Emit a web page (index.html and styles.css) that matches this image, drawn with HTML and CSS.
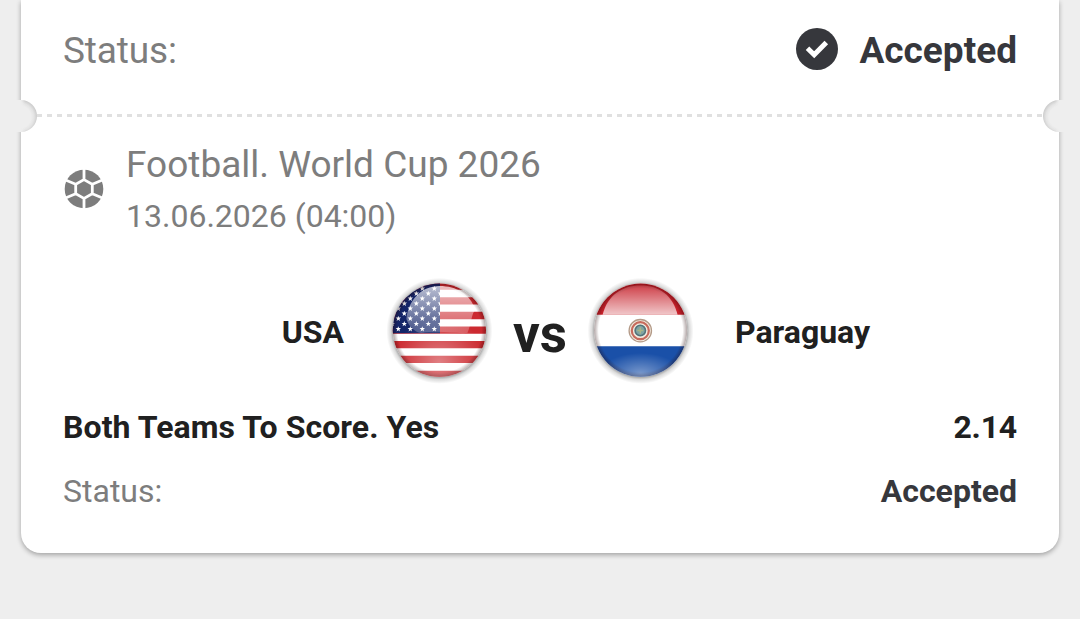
FILE: index.html
```html
<!DOCTYPE html>
<html lang="en">
<head>
    <meta charset="UTF-8">
    <meta name="viewport" content="width=device-width, initial-scale=1.0">
    <title>Bet slip</title>
    <link rel="stylesheet" href="styles.css">
</head>
<body>
    <main class="ticket">
        <div class="ticket-status">
            <span class="label">Status:</span>
            <span class="value">
                <svg class="check" viewBox="0 0 42 42">
                    <circle cx="21" cy="21" r="21" fill="#36373c"/>
                    <path d="M11.5 20.3l6.7 6.5L30.3 14.5" fill="none" stroke="#fff" stroke-width="5"/>
                </svg>
                Accepted
            </span>
        </div>

        <div class="tear">
            <span class="notch notch-left"></span>
            <span class="dashes"></span>
            <span class="notch notch-right"></span>
        </div>

        <section class="event">
            <header class="event-header">
                <svg class="ball" viewBox="0 0 40 40">
                    <circle cx="20.5" cy="20" r="19.3" fill="#7d7d7d"/>
                    <path d="M20.5 10.6l8.3 4.7v9.4l-8.3 4.7-8.300-4.700v-9.400zM20.5 0v10.600M20.5 29.400v11M12.200 15.300L2 11M28.800 15.300L39 11M12.200 24.700L2 29M28.800 24.700L39 29" fill="none" stroke="#fff" stroke-width="2.800"/>
                </svg>
                <div>
                    <div class="league">Football. World Cup 2026</div>
                    <div class="date">13.06.2026 (04:00)</div>
                </div>
            </header>

            <div class="match">
                <span class="team team-home">USA</span>
                <svg class="flag" viewBox="0 0 120 120">
                    <defs>
                        <clipPath id="usa"><circle cx="59.4" cy="60.2" r="46.6"/></clipPath>
                        <clipPath id="canton"><path d="M10 10h50v53.3H10z"/></clipPath>
                        <radialGradient id="halo">
                            <stop offset=".86" stop-color="#000" stop-opacity=".4"/>
                            <stop offset=".92" stop-color="#000" stop-opacity=".14"/>
                            <stop offset="1" stop-color="#000" stop-opacity="0"/>
                        </radialGradient>
                        <radialGradient id="rim">
                            <stop offset=".9" stop-color="#200" stop-opacity="0"/>
                            <stop offset="1" stop-color="#200" stop-opacity=".35"/>
                        </radialGradient>
                        <linearGradient id="gloss" x1="0" y1="0" x2="0" y2="1">
                            <stop offset="0" stop-color="#fff" stop-opacity=".7"/>
                            <stop offset="1" stop-color="#fff" stop-opacity=".2"/>
                        </linearGradient>
                        <radialGradient id="glow" cx=".5" cy=".85" r=".5">
                            <stop offset="0" stop-color="#fff" stop-opacity=".4"/>
                            <stop offset="1" stop-color="#fff" stop-opacity="0"/>
                        </radialGradient>
                        <path id="star" d="M0-2.7l.7 1.8h2L1.1.4l.6 2L0 1.2l-1.7 1.2.6-2-1.6-1.3h2z" fill="#fff"/>
                        <g id="row">
                            <use href="#star" x="6.3"/>
                            <use href="#star" x="18.3"/>
                            <use href="#star" x="30.3"/>
                            <use href="#star" x="42.3"/>
                            <use href="#star" x="54.3"/>
                        </g>
                    </defs>
                    <circle cx="59.4" cy="60.8" r="53" fill="url(#halo)"/>
                    <g clip-path="url(#usa)">
                        <path d="M10 10h100v100H10z" fill="#fff"/>
                        <path d="M10 16h100M10 30.8h100M10 45.5h100M10 60.1h100M10 74.6h100M10 89.4h100M10 104.3h100" stroke="#cc2a30" stroke-width="7.3"/>
                        <g clip-path="url(#canton)">
                            <path d="M10 10h50v54H10z" fill="#142568"/>
                            <use href="#row" y="18.5"/>
                            <use href="#row" x="6" y="23.5"/>
                            <use href="#row" y="28.5"/>
                            <use href="#row" x="6" y="33.5"/>
                            <use href="#row" y="38.5"/>
                            <use href="#row" x="6" y="43.5"/>
                            <use href="#row" y="48.5"/>
                            <use href="#row" x="6" y="53.8"/>
                            <use href="#row" y="59"/>
                        </g>
                        <circle cx="59.4" cy="60.2" r="46.6" fill="url(#rim)"/>
                        <path d="M59.4 16c17 0 31 8 36 24-4 3-4 14-8 23-12 1-27-3-46 0-7-1-13-7-15-14 2-19 15-33 33-33z" fill="url(#gloss)"/>
                        <circle cx="59.4" cy="60.2" r="46.6" fill="url(#glow)"/>
                    </g>
                </svg>
                <span class="versus">vs</span>
                <svg class="flag" viewBox="0 0 120 120">
                    <defs>
                        <clipPath id="paraguay"><circle cx="60.6" cy="60.2" r="46.6"/></clipPath>
                        <linearGradient id="shine" x1="0" y1="0" x2="0" y2="1">
                            <stop offset="0" stop-color="#fff" stop-opacity=".15"/>
                            <stop offset="1" stop-color="#fff" stop-opacity=".75"/>
                        </linearGradient>
                    </defs>
                    <circle cx="60.6" cy="60.8" r="53" fill="url(#halo)"/>
                    <g clip-path="url(#paraguay)">
                        <path d="M10 10h100v100H10z" fill="#fff"/>
                        <path d="M10 10h100v34.7H10z" fill="#c6202a"/>
                        <path d="M10 76.3h100V110H10z" fill="#1a50a8"/>
                        <circle cx="60.6" cy="60.2" r="46.6" fill="url(#rim)"/>
                        <path d="M60.6 15.5c19 0 32 10 37 29.2h-75c5-19.2 19-29.2 38-29.2z" fill="url(#shine)"/>
                        <ellipse cx="60.6" cy="89" rx="40" ry="20" fill="url(#glow)"/>
                        <circle cx="60.3" cy="60.7" r="11.2" fill="#f4ece0" stroke="#b39a88" stroke-width="1.3"/>
                        <circle cx="60.3" cy="60.7" r="8.5" fill="none" stroke="#c66a5c" stroke-width="2.2"/>
                        <circle cx="60.3" cy="60.5" r="5.2" fill="#7fa3a2" stroke="#52757b" stroke-width="1.6"/>
                        <path d="M60.3 57.5v6M57.3 60.5h6" stroke="#a9b584" stroke-width="1.5"/>
                    </g>
                </svg>
                <span class="team team-away">Paraguay</span>
            </div>

            <div class="bet">
                <span class="pick">Both Teams To Score. Yes</span>
                <span class="odds">2.14</span>
            </div>
            <div class="bet-status">
                <span class="label">Status:</span>
                <span class="value">Accepted</span>
            </div>
        </section>
    </main>
</body>
</html>
```
FILE: styles.css
```css
* {
    box-sizing: border-box;
}
body {
    margin: 0;
    height: 619px;
    overflow: hidden;
    background: #eee;
    font-family: Roboto, sans-serif;
    color: #202020;
}
.ticket {
    height: 553px;
    margin: 0 21px;
    background: #fff;
    border-radius: 0 0 20px 20px;
    box-shadow: 0 2px 5px rgba(0, 0, 0, .32);
}
.ticket-status {
    display: flex;
    justify-content: space-between;
    align-items: center;
    height: 100px;
    padding: 0 42px;
    font-size: 37px;
}
.label {
    color: #7d7d7d;
}
.ticket-status .label {
    letter-spacing: -.15px;
}
.value {
    display: flex;
    align-items: center;
    gap: 21px;
    color: #36373c;
    font-weight: 700;
}
.check {
    width: 42px;
    height: 42px;
    margin-bottom: 2px;
}
.tear {
    display: flex;
    align-items: center;
    height: 32px;
    margin: 0 -8px;
}
.notch {
    flex: none;
    width: 24px;
    height: 32px;
}
/* the gradient keeps the inner shadow on the curved side only */
.notch-left {
    border-radius: 0 16px 16px 0;
    background: radial-gradient(circle at 7px 17px, #eee 11px, #e4e4e4 14px, #cdcdcd 17px);
}
.notch-right {
    border-radius: 16px 0 0 16px;
    background: radial-gradient(circle at 17px 17px, #eee 11px, #e4e4e4 14px, #cdcdcd 17px);
}
.notch-left {
    background: linear-gradient(90deg, #eee 8px, transparent 12px), radial-gradient(circle at 7px 17px, #eee 11px, #e4e4e4 14px, #cdcdcd 17px);
}
.notch-right {
    background: linear-gradient(270deg, #eee 8px, transparent 12px), radial-gradient(circle at 17px 17px, #eee 11px, #e4e4e4 14px, #cdcdcd 17px);
}
.dashes {
    flex: 1;
    height: 3px;
    margin-bottom: 1px;
    background: repeating-linear-gradient(90deg, #e0e0e0 0 5px, #fff 5px 10px);
}
.event {
    padding: 0 42px;
}
.event-header {
    display: flex;
    align-items: center;
    gap: 22px;
    height: 114px;
    color: #7d7d7d;
}
.ball {
    width: 41px;
    height: 40px;
}
.league {
    padding-top: 1px;
    font-size: 37px;
    line-height: 54px;
}
.date {
    font-size: 32px;
    line-height: 49px;
}
.match {
    display: grid;
    grid-template-columns: 1fr 120px 80px 120px 1fr;
    align-items: center;
    height: 168px;
    font-size: 32px;
    font-weight: 700;
}
.flag {
    width: 120px;
    height: 120px;
}
.team {
    padding-top: 3px;
}
.team-home {
    padding-right: 36px;
    text-align: right;
}
.team-away {
    padding-left: 35px;
}
.versus {
    padding-top: 7px;
    font-size: 53px;
    text-align: center;
}
.bet,
.bet-status {
    display: flex;
    justify-content: space-between;
    align-items: center;
    height: 64px;
    font-size: 32px;
}
.bet {
    margin-top: -19px;
    font-weight: 700;
}
.pick {
    letter-spacing: .08px;
}
.odds {
    letter-spacing: -.2px;
}
```
